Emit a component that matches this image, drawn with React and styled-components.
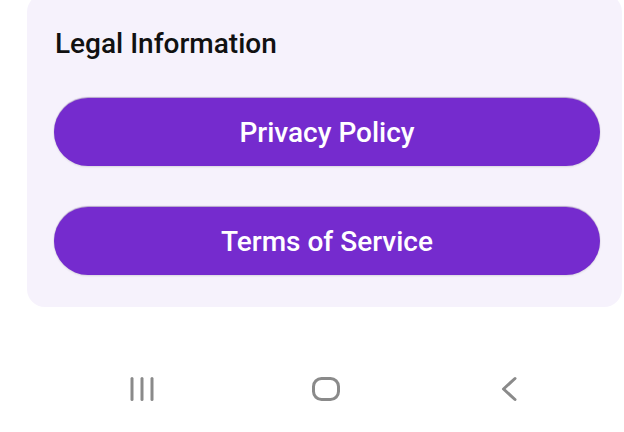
import React from "react";
import styled, { createGlobalStyle } from "styled-components";

const Global = createGlobalStyle`
  html, body { margin: 0; padding: 0; background: #ffffff; }
  body { width: 624px; height: 432px; overflow: hidden; font-family: Roboto, "Noto Sans", sans-serif; }
`;

const Page = styled.div`
  width: 624px;
  height: 432px;
  display: flex;
  flex-direction: column;
`;

const Card = styled.section`
  margin: -6px 2px 0 27px;
  padding: 34px 22px 32px 27px;
  background: #f6f2fc;
  border-radius: 18px;
  display: flex;
  flex-direction: column;
`;

const Title = styled.h2`
  margin: 0 0 38px 1px;
  font-size: 28px;
  font-weight: 500;
  color: #111111;
  line-height: 32px;
`;

const Buttons = styled.div`
  display: flex;
  flex-direction: column;
  gap: 41px;
`;

const PillButton = styled.button`
  height: 68px;
  border: none;
  border-radius: 34px;
  background: #752bce;
  color: #ffffff;
  font-family: Roboto, "Noto Sans", sans-serif;
  font-size: 28px;
  font-weight: 500;
  padding: 0;
  box-shadow: 0 -1px 1px rgba(60, 20, 110, 0.35), 0 1px 2px rgba(0, 0, 0, 0.12);
  cursor: pointer;
`;

const NavBar = styled.nav`
  flex: 1;
  display: flex;
  align-items: center;
  justify-content: space-between;
  padding: 38px 95px 0 122px;
`;

const NavIcon = styled.svg`
  display: block;
`;

const stroke = "#8a8a8a";

export default function App() {
  return (
    <>
      <Global />
      <Page>
        <Card>
          <Title>Legal Information</Title>
          <Buttons>
            <PillButton>Privacy Policy</PillButton>
            <PillButton>Terms of Service</PillButton>
          </Buttons>
        </Card>
        <NavBar>
          <NavIcon width="40" height="30" viewBox="0 0 40 30">
            <g stroke={stroke} strokeWidth="3" strokeLinecap="round">
              <line x1="10" y1="4.5" x2="10" y2="25.5" />
              <line x1="20" y1="4.5" x2="20" y2="25.5" />
              <line x1="30" y1="4.5" x2="30" y2="25.5" />
            </g>
          </NavIcon>
          <NavIcon width="40" height="30" viewBox="0 0 40 30">
            <rect x="7.5" y="4.5" width="25" height="21" rx="8" fill="none" stroke={stroke} strokeWidth="3" />
          </NavIcon>
          <NavIcon width="40" height="30" viewBox="0 0 40 30">
            <polyline points="26,4.5 14.5,15 26,25.5" fill="none" stroke={stroke} strokeWidth="3" strokeLinecap="round" strokeLinejoin="round" />
          </NavIcon>
        </NavBar>
      </Page>
    </>
  );
}
